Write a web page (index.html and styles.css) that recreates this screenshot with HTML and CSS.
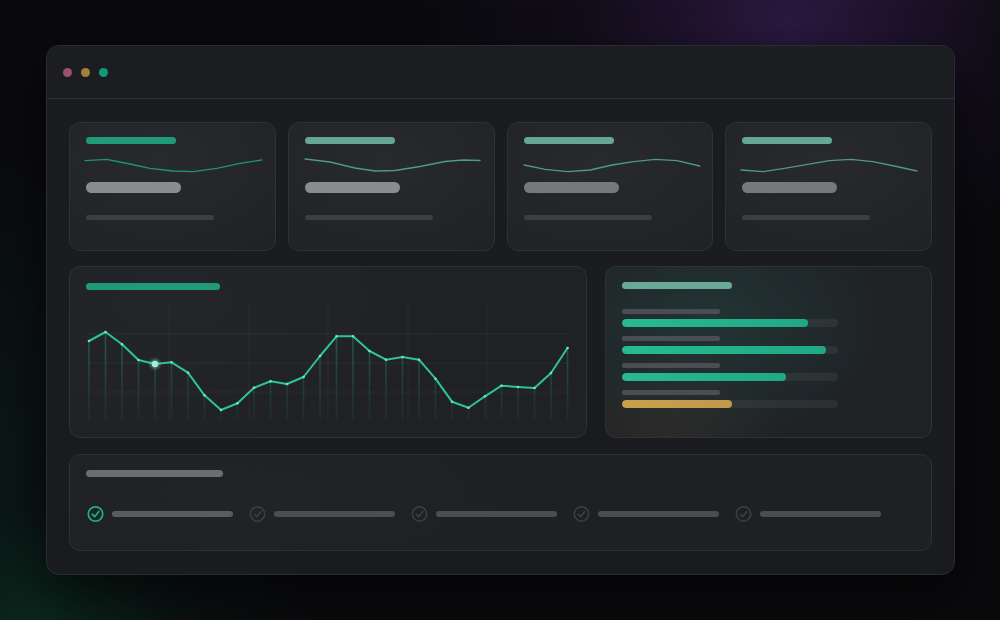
FILE: index.html
```html
<!DOCTYPE html>
<html lang="en">
<head>
<meta charset="utf-8">
<title>Dashboard</title>
<link rel="stylesheet" href="styles.css">
</head>
<body>
<div class="window">
  <div class="titlebar">
    <span class="dot dot-red"></span>
    <span class="dot dot-amber"></span>
    <span class="dot dot-green"></span>
  </div>
  <div class="content">
    <div class="stats">
      <div class="card stat">
        <div class="bar-title accent"></div>
        <svg class="spark" viewBox="0 0 176 24" width="176" height="24"><polyline class="spark-line strong" points="-1,9.7 20.7,8.3 44,13 64,17.3 87.3,20 107.3,20.7 130.7,17.3 154,12.3 175.7,9"/></svg>
        <div class="pill"></div>
        <div class="subline"></div>
      </div>
      <div class="card stat">
        <div class="bar-title muted"></div>
        <svg class="spark" viewBox="0 0 176 24" width="176" height="24"><polyline class="spark-line" points="0,8 25,11 50,17 70,20 90,19.5 115,15.5 140,10.5 158,9 175,9.5"/></svg>
        <div class="pill"></div>
        <div class="subline"></div>
      </div>
      <div class="card stat">
        <div class="bar-title muted"></div>
        <svg class="spark" viewBox="0 0 176 24" width="176" height="24"><polyline class="spark-line" points="0,14 21.3,18.3 43.7,20.7 66.3,19 88,14 109.7,10.7 131.3,8.3 153,9.7 175.7,15"/></svg>
        <div class="pill pill-dim"></div>
        <div class="subline"></div>
      </div>
      <div class="card stat">
        <div class="bar-title muted"></div>
        <svg class="spark" viewBox="0 0 176 24" width="176" height="24"><polyline class="spark-line" points="-1,19 21.3,20.7 42.3,17.3 65.7,13.3 87.3,9.7 109,8.3 130.7,10.7 152.3,15 175,20"/></svg>
        <div class="pill pill-dim"></div>
        <div class="subline"></div>
      </div>
    </div>

    <div class="middle">
      <div class="card chart">
        <div class="bar-title accent chart-title"></div>
        <svg class="chart-svg" viewBox="0 0 484 124" width="484" height="124">
          <defs>
            <linearGradient id="drop" gradientUnits="userSpaceOnUse" x1="0" y1="30" x2="0" y2="124">
              <stop offset="0" stop-color="#2cc497" stop-opacity="0.34"/>
              <stop offset="1" stop-color="#2cc497" stop-opacity="0.05"/>
            </linearGradient>
            <radialGradient id="halo">
              <stop offset="0" stop-color="#a8f7dc" stop-opacity="0.6"/>
              <stop offset="1" stop-color="#a8f7dc" stop-opacity="0"/>
            </radialGradient>
          </defs>
          <g class="grid">
            <line x1="0" y1="36" x2="486" y2="36"/>
            <line x1="0" y1="65" x2="486" y2="65"/>
            <line x1="0" y1="94" x2="486" y2="94"/>
            <line x1="83" y1="5" x2="83" y2="122"/>
            <line x1="163" y1="5" x2="163" y2="122"/>
            <line x1="242" y1="5" x2="242" y2="122"/>
            <line x1="322" y1="5" x2="322" y2="122"/>
            <line x1="401" y1="5" x2="401" y2="122"/>
          </g>
          <g class="drops" stroke="url(#drop)">
            <line x1="3" y1="43" x2="3" y2="122"/>
            <line x1="19.5" y1="34" x2="19.5" y2="122"/>
            <line x1="36" y1="46.3" x2="36" y2="122"/>
            <line x1="52.5" y1="62" x2="52.5" y2="122"/>
            <line x1="69" y1="66" x2="69" y2="122"/>
            <line x1="85.5" y1="64.3" x2="85.5" y2="122"/>
            <line x1="102" y1="74.7" x2="102" y2="122"/>
            <line x1="118.5" y1="97.3" x2="118.5" y2="122"/>
            <line x1="135" y1="112" x2="135" y2="122"/>
            <line x1="151.5" y1="105.3" x2="151.5" y2="122"/>
            <line x1="168" y1="89.7" x2="168" y2="122"/>
            <line x1="184.5" y1="83.3" x2="184.5" y2="122"/>
            <line x1="201" y1="86" x2="201" y2="122"/>
            <line x1="217.5" y1="79" x2="217.5" y2="122"/>
            <line x1="234" y1="58" x2="234" y2="122"/>
            <line x1="250.5" y1="38.3" x2="250.5" y2="122"/>
            <line x1="267" y1="38.3" x2="267" y2="122"/>
            <line x1="283.5" y1="53" x2="283.5" y2="122"/>
            <line x1="300" y1="61.7" x2="300" y2="122"/>
            <line x1="316.5" y1="59" x2="316.5" y2="122"/>
            <line x1="333" y1="61.7" x2="333" y2="122"/>
            <line x1="349.5" y1="80.7" x2="349.5" y2="122"/>
            <line x1="366" y1="103.7" x2="366" y2="122"/>
            <line x1="382.5" y1="109.7" x2="382.5" y2="122"/>
            <line x1="399" y1="98.3" x2="399" y2="122"/>
            <line x1="415.5" y1="87.7" x2="415.5" y2="122"/>
            <line x1="432" y1="89" x2="432" y2="122"/>
            <line x1="448.5" y1="90" x2="448.5" y2="122"/>
            <line x1="465" y1="75" x2="465" y2="122"/>
            <line x1="481.5" y1="50" x2="481.5" y2="122"/>
          </g>
          <polyline class="main-line" points="3,43 19.5,34 36,46.3 52.5,62 69,66 85.5,64.3 102,74.7 118.5,97.3 135,112 151.5,105.3 168,89.7 184.5,83.3 201,86 217.5,79 234,58 250.5,38.3 267,38.3 283.5,53 300,61.7 316.5,59 333,61.7 349.5,80.7 366,103.7 382.5,109.7 399,98.3 415.5,87.7 432,89 448.5,90 465,75 481.5,50"/>
          <g class="vertices">
            <circle cx="3" cy="43" r="1.3"/><circle cx="19.5" cy="34" r="1.3"/><circle cx="36" cy="46.3" r="1.3"/><circle cx="52.5" cy="62" r="1.3"/>
            <circle cx="85.5" cy="64.3" r="1.3"/><circle cx="102" cy="74.7" r="1.3"/><circle cx="118.5" cy="97.3" r="1.3"/><circle cx="135" cy="112" r="1.3"/>
            <circle cx="151.5" cy="105.3" r="1.3"/><circle cx="168" cy="89.7" r="1.3"/><circle cx="184.5" cy="83.3" r="1.3"/><circle cx="201" cy="86" r="1.3"/>
            <circle cx="217.5" cy="79" r="1.3"/><circle cx="234" cy="58" r="1.3"/><circle cx="250.5" cy="38.3" r="1.3"/><circle cx="267" cy="38.3" r="1.3"/>
            <circle cx="283.5" cy="53" r="1.3"/><circle cx="300" cy="61.7" r="1.3"/><circle cx="316.5" cy="59" r="1.3"/><circle cx="333" cy="61.7" r="1.3"/>
            <circle cx="349.5" cy="80.7" r="1.3"/><circle cx="366" cy="103.7" r="1.3"/><circle cx="382.5" cy="109.7" r="1.3"/><circle cx="399" cy="98.3" r="1.3"/>
            <circle cx="415.5" cy="87.7" r="1.3"/><circle cx="432" cy="89" r="1.3"/><circle cx="448.5" cy="90" r="1.3"/><circle cx="465" cy="75" r="1.3"/>
            <circle cx="481.5" cy="50" r="1.3"/>
          </g>
          <circle cx="69" cy="66" r="7" fill="url(#halo)"/>
          <circle class="focus-dot" cx="69" cy="66" r="3.2"/>
        </svg>
      </div>

      <div class="card bars">
        <div class="bar-title muted-light bars-title"></div>
        <div class="bar-rows">
          <div class="bar-row">
            <div class="bar-label"></div>
            <div class="track"><div class="fill" style="width:86%"></div></div>
          </div>
          <div class="bar-row">
            <div class="bar-label"></div>
            <div class="track"><div class="fill" style="width:94.5%"></div></div>
          </div>
          <div class="bar-row">
            <div class="bar-label"></div>
            <div class="track"><div class="fill" style="width:76%"></div></div>
          </div>
          <div class="bar-row">
            <div class="bar-label"></div>
            <div class="track"><div class="fill fill-amber" style="width:51%"></div></div>
          </div>
        </div>
      </div>
    </div>

    <div class="card tasks">
      <div class="tasks-title"></div>
      <div class="task-row">
        <div class="task">
          <svg class="check done" viewBox="0 0 18 18" width="18" height="18"><circle cx="9.5" cy="9" r="7.2"/><path d="M6.3 9.2 L8.7 11.7 L12.8 6.5"/></svg>
          <div class="task-line first"></div>
        </div>
        <div class="task">
          <svg class="check" viewBox="0 0 18 18" width="18" height="18"><circle cx="9.5" cy="9" r="7.2"/><path d="M6.3 9.2 L8.7 11.7 L12.8 6.5"/></svg>
          <div class="task-line"></div>
        </div>
        <div class="task">
          <svg class="check" viewBox="0 0 18 18" width="18" height="18"><circle cx="9.5" cy="9" r="7.2"/><path d="M6.3 9.2 L8.7 11.7 L12.8 6.5"/></svg>
          <div class="task-line"></div>
        </div>
        <div class="task">
          <svg class="check" viewBox="0 0 18 18" width="18" height="18"><circle cx="9.5" cy="9" r="7.2"/><path d="M6.3 9.2 L8.7 11.7 L12.8 6.5"/></svg>
          <div class="task-line"></div>
        </div>
        <div class="task">
          <svg class="check" viewBox="0 0 18 18" width="18" height="18"><circle cx="9.5" cy="9" r="7.2"/><path d="M6.3 9.2 L8.7 11.7 L12.8 6.5"/></svg>
          <div class="task-line"></div>
        </div>
      </div>
    </div>
  </div>
</div>
</body>
</html>
```

FILE: styles.css
```css
* { box-sizing: border-box; }

html, body {
  width: 1000px;
  height: 620px;
  margin: 0;
  overflow: hidden;
}

body {
  font-family: "Inter", "Liberation Sans", sans-serif;
  background:
    radial-gradient(ellipse 380px 240px at 790px 20px, rgba(58, 30, 86, 0.7), rgba(40, 22, 60, 0.25) 55%, transparent 100%),
    radial-gradient(ellipse 280px 240px at 40px 640px, rgba(12, 66, 46, 0.55), rgba(10, 40, 30, 0.2) 55%, transparent 100%),
    radial-gradient(ellipse 110px 280px at 0px 420px, rgba(10, 40, 30, 0.4), transparent 100%),
    #0a0a0d;
  padding-top: 45px;
  padding-left: 46px;
}

.window {
  width: 909px;
  height: 530px;
  border: 1px solid #2a2c31;
  border-radius: 13px;
  background: linear-gradient(180deg, #1b1c20 0%, #1a1b1f 100%);
  box-shadow: 0 20px 50px rgba(0, 0, 0, 0.55);
  overflow: hidden;
}

.titlebar {
  height: 53px;
  border-bottom: 1px solid #303237;
  display: flex;
  align-items: center;
  gap: 9px;
  padding-left: 16px;
  background: #1c1d21;
}

.dot {
  width: 9px;
  height: 9px;
  border-radius: 50%;
}
.dot-red { background: #9c4f69; }
.dot-amber { background: #a3803a; }
.dot-green { background: #14987a; }

.content {
  padding: 23px 22px 0;
}

.card {
  border: 1px solid #2f3136;
  border-radius: 11px;
  background: #1f2125;
  min-width: 0;
}

.stats {
  display: grid;
  grid-template-columns: repeat(4, minmax(0, 1fr));
  gap: 12px;
  height: 129px;
}

.stat {
  padding: 14px 16px 0;
  background:
    radial-gradient(ellipse 170px 110px at 45% 30%, rgba(255, 255, 255, 0.035), transparent 100%),
    #202226;
}

.bar-title {
  height: 7px;
  width: 90px;
  border-radius: 4px;
}
.accent { background: #1f9b79; }
.muted { background: #66a793; }
.muted-light { background: #6aa996; }

.spark {
  display: block;
  margin-top: 7px;
  overflow: visible;
}
.spark-line {
  fill: none;
  stroke: #4d9a85;
  stroke-width: 1.3;
  stroke-linejoin: round;
  stroke-linecap: round;
}
.spark-line.strong { stroke: #1c9675; }

.pill {
  margin-top: 7px;
  width: 95px;
  height: 11px;
  border-radius: 6px;
  background: #8a8c8e;
}
.pill-dim { background: #76787b; }

.subline {
  margin-top: 22px;
  width: 128px;
  height: 5px;
  border-radius: 3px;
  background: #3c3e43;
}

.middle {
  margin-top: 15px;
  display: grid;
  grid-template-columns: minmax(0, 1fr) 327px;
  gap: 18px;
  height: 172px;
}

.chart {
  padding: 16px 16px 0;
  background:
    radial-gradient(ellipse 300px 160px at 20% 20%, rgba(255, 255, 255, 0.02), transparent 100%),
    #1f2125;
}
.chart-title { width: 134px; }

.chart-svg {
  display: block;
  margin-top: 8px;
  overflow: visible;
}
.grid line {
  stroke: rgba(255, 255, 255, 0.045);
  stroke-width: 1;
}
.drops line { stroke-width: 1.6; }
.main-line {
  fill: none;
  stroke: #2cc497;
  stroke-width: 2;
  stroke-linejoin: round;
  stroke-linecap: round;
}
.vertices circle { fill: #6fe6c0; }
.focus-dot { fill: #9ef2d4; }

.bars {
  padding: 15px 16px 0;
  background:
    radial-gradient(ellipse 190px 130px at 32% 32%, rgba(46, 130, 108, 0.20), transparent 100%),
    radial-gradient(ellipse 120px 90px at 18% 100%, rgba(150, 115, 55, 0.10), transparent 100%),
    #1f2125;
}
.bars-title { width: 110px; }

.bar-rows {
  margin-top: 20px;
  display: flex;
  flex-direction: column;
  gap: 9px;
}
.bar-row {
  display: flex;
  flex-direction: column;
  gap: 5px;
}
.bar-label {
  width: 98px;
  height: 5px;
  border-radius: 2px;
  background: #4a4e52;
}
.track {
  width: 216px;
  height: 8px;
  border-radius: 4px;
  background: rgba(255, 255, 255, 0.06);
  overflow: hidden;
}
.fill {
  height: 100%;
  border-radius: 4px;
  background: linear-gradient(90deg, #27bb91, #20a884);
}
.fill-amber {
  background: linear-gradient(90deg, #c8a14e, #c09a4a);
}

.tasks {
  margin-top: 16px;
  height: 97px;
  padding: 15px 16px 0;
  background:
    radial-gradient(ellipse 300px 100px at 20% 40%, rgba(255, 255, 255, 0.015), transparent 100%),
    #1f2024;
}
.tasks-title {
  width: 137px;
  height: 7px;
  border-radius: 4px;
  background: #6b6d73;
}
.task-row {
  margin-top: 28px;
  display: flex;
  gap: 15px;
}
.task {
  display: flex;
  align-items: center;
  gap: 8px;
}
.check {
  display: block;
  fill: none;
  stroke: #3d3f44;
  stroke-width: 1.5;
  stroke-linecap: round;
  stroke-linejoin: round;
}
.check.done { stroke: #1eac80; stroke-width: 1.8; }
.task-line {
  width: 121px;
  height: 6px;
  border-radius: 3px;
  background: #4b4d52;
}
.task-line.first { background: #5a5c61; }
```
